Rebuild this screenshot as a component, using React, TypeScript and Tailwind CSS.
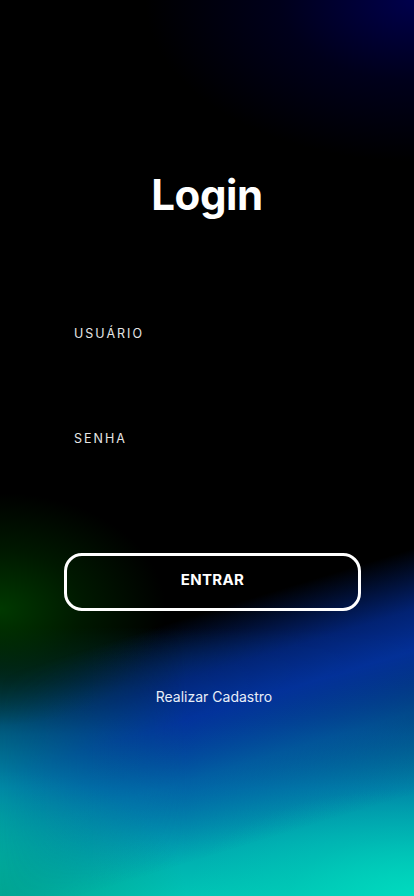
export default function App() {
  return (
    <main className="relative min-h-[896px] w-full overflow-hidden bg-black font-['Inter',sans-serif] text-white">
      {/* backdrop: base teal fade + navy corner + green glow */}
      <div className="absolute inset-0 bg-[radial-gradient(ellipse_65%_18%_at_100%_0%,rgba(0,0,80,0.95)_0%,rgba(0,0,45,0.6)_50%,transparent_100%),radial-gradient(ellipse_55%_12%_at_100%_100%,rgba(0,222,192,0.85)_0%,rgba(0,212,186,0.35)_55%,transparent_100%),radial-gradient(ellipse_45%_14%_at_0%_100%,rgba(0,160,140,0.85)_0%,rgba(0,160,140,0.4)_55%,transparent_100%),radial-gradient(ellipse_40%_13%_at_0%_68%,rgba(0,60,0,0.95)_0%,rgba(0,45,0,0.55)_50%,transparent_100%),linear-gradient(180deg,#000_0%,#000_70%,#00263a_76%,#005e82_82%,#0086a8_88%,#00a8b0_94%,#00c4b4_100%)]" />
      {/* diagonal blue streak */}
      <div className="absolute inset-0 bg-[linear-gradient(163deg,transparent_66%,rgba(2,40,135,0.85)_72%,rgba(3,50,158,0.95)_76%,rgba(3,75,165,0.6)_82%,transparent_90%)] [mask-image:linear-gradient(to_right,transparent_0%,black_45%)]" />

      <div className="relative flex flex-col pt-[166px]">
        <h1 className="text-center text-[42px] font-bold leading-[58px] tracking-[-0.01em]">
          Login
        </h1>

        <form className="mt-[101px] flex flex-col pl-[74px] pr-[53px]">
          <label className="flex flex-col">
            <span className="text-[12.5px] leading-[18px] tracking-[0.16em] text-[#e6e6e6]">
              USUÁRIO
            </span>
            <input
              type="text"
              className="mt-2 h-[40px] bg-transparent outline-none text-white"
            />
          </label>

          <label className="mt-[39px] flex flex-col">
            <span className="text-[12.5px] leading-[18px] tracking-[0.16em] text-[#e6e6e6]">
              SENHA
            </span>
            <input
              type="password"
              className="mt-2 h-[40px] bg-transparent outline-none text-white"
            />
          </label>
        </form>

        <button className="ml-16 mt-[57px] h-[58px] w-[297px] rounded-[18px] border-[3px] border-white bg-transparent pb-1 text-[15px] font-bold tracking-[0.02em]">
          ENTRAR
        </button>

        <p className="mt-[75px] pl-[14px] text-center text-[14px] text-[#e8eef8]">
          Realizar Cadastro
        </p>
      </div>
    </main>
  );
}
